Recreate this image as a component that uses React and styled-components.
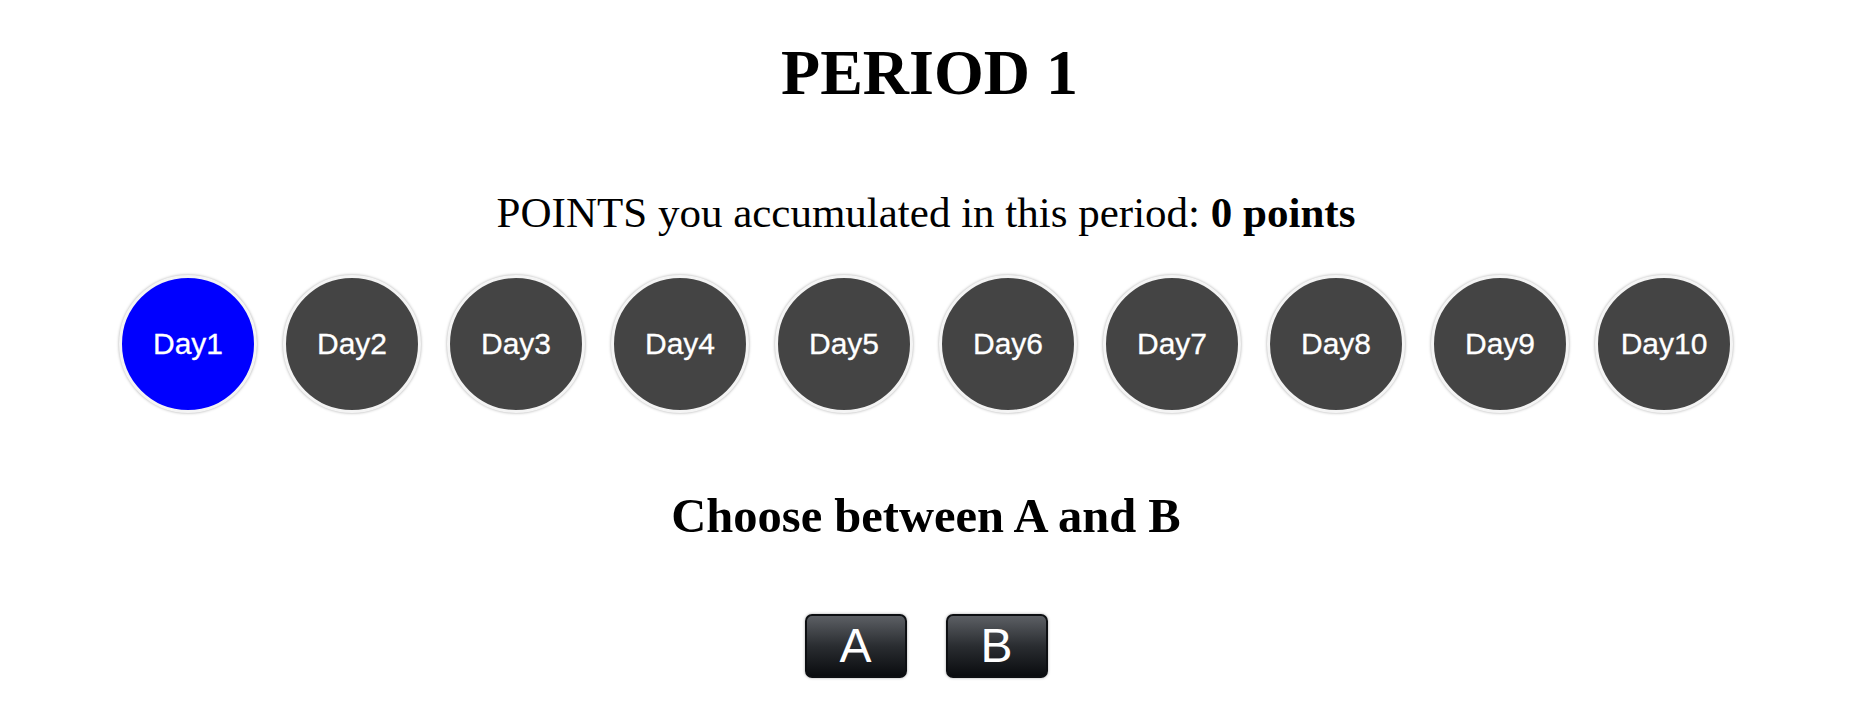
import React from 'react';
import styled, { createGlobalStyle } from 'styled-components';

const GlobalStyle = createGlobalStyle`
  html, body {
    margin: 0;
    padding: 0;
    background: #ffffff;
  }
  body {
    font-family: "Liberation Serif", "Times New Roman", serif;
    color: #000;
  }
`;

const Page = styled.div`
  display: flex;
  flex-direction: column;
  align-items: center;
  padding: 41px 24px 40px 0;
`;

const Title = styled.h1`
  margin: 0;
  padding-left: 7px;
  font-size: 64px;
  line-height: 64px;
  font-weight: bold;
`;

const PointsLine = styled.p`
  margin: 86px 0 0;
  font-size: 43px;
  line-height: 43px;
`;

const DayRow = styled.div`
  display: flex;
  gap: 26px;
  margin-top: 41px;
`;

const DayCircle = styled.div`
  width: 132px;
  height: 132px;
  border-radius: 50%;
  border: 3px solid #f4f4f4;
  box-shadow: 0 0 3px rgba(0, 0, 0, 0.35);
  background: ${({ active }) => (active ? '#0000ff' : '#444444')};
  color: #ffffff;
  display: flex;
  align-items: center;
  justify-content: center;
  font-family: "Liberation Sans", Arial, sans-serif;
  font-size: 30px;
  -webkit-text-stroke: 0.3px #ffffff;
`;

const ChoiceHeading = styled.h2`
  margin: 79px 0 0;
  font-size: 48.5px;
  line-height: 48px;
  font-weight: bold;
`;

const ButtonRow = styled.div`
  display: flex;
  gap: 39px;
  margin-top: 74px;
`;

const ChoiceButton = styled.button`
  width: 102px;
  height: 64px;
  border: 2px solid #0d0f12;
  border-radius: 7px;
  background: linear-gradient(to bottom, #5c5f64 0%, #2a2d31 50%, #0a0c0f 100%);
  box-shadow: 0 0 3px rgba(0, 0, 0, 0.35);
  color: #ffffff;
  font-family: "Liberation Sans", Arial, sans-serif;
  font-size: 48px;
  line-height: 1;
  padding: 0;
  cursor: pointer;
  display: flex;
  align-items: center;
  justify-content: center;
`;

const days = Array.from({ length: 10 }, (_, i) => `Day${i + 1}`);

export default function App() {
  return (
    <>
      <GlobalStyle />
      <Page>
        <Title>PERIOD 1</Title>
        <PointsLine>
          POINTS you accumulated in this period: <b>0 points</b>
        </PointsLine>
        <DayRow>
          {days.map((day, i) => (
            <DayCircle key={day} active={i === 0}>
              {day}
            </DayCircle>
          ))}
        </DayRow>
        <ChoiceHeading>Choose between A and B</ChoiceHeading>
        <ButtonRow>
          <ChoiceButton>A</ChoiceButton>
          <ChoiceButton>B</ChoiceButton>
        </ButtonRow>
      </Page>
    </>
  );
}
